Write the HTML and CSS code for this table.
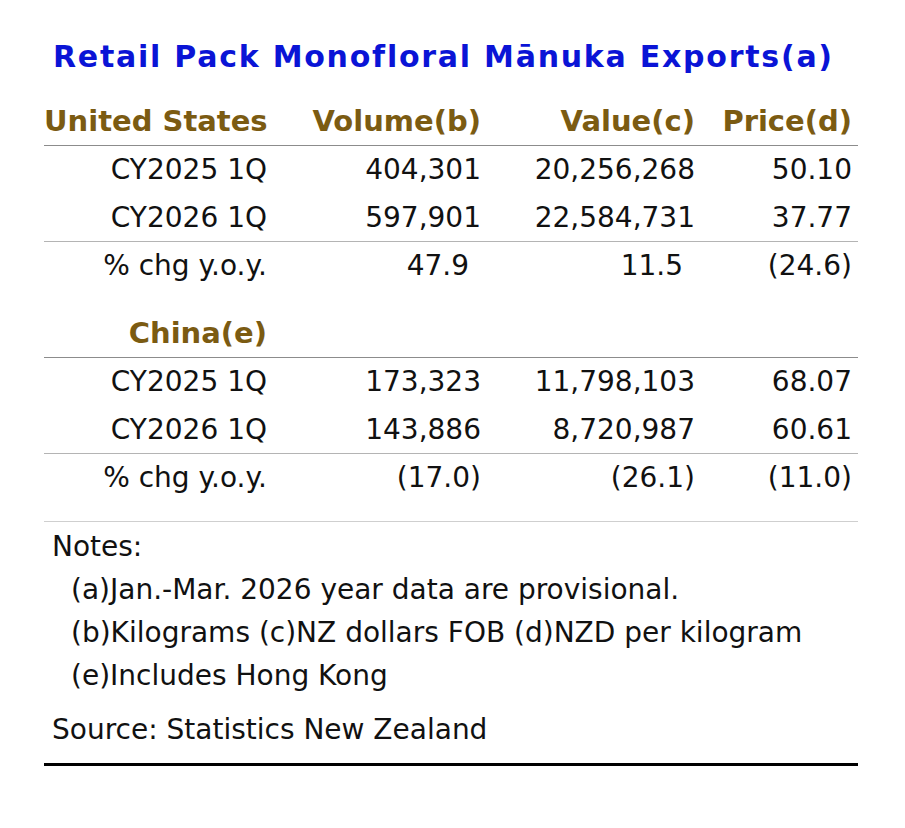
FILE: index.html
```html
<!DOCTYPE html>
<html lang="en">
<head>
<meta charset="utf-8">
<title>Retail Pack Monofloral Mānuka Exports</title>
<link rel="stylesheet" href="styles.css">
</head>
<body>
<div class="sheet">
  <h1 class="title">Retail Pack Monofloral Mānuka Exports(a)</h1>
  <table class="data">
    <colgroup>
      <col class="c1"><col class="c2"><col class="c3"><col class="c4">
    </colgroup>
    <tr class="head">
      <th>United States</th><th>Volume(b)</th><th>Value(c)</th><th>Price(d)</th>
    </tr>
    <tr><td>CY2025 1Q</td><td>404,301</td><td>20,256,268</td><td>50.10</td></tr>
    <tr class="ruled"><td>CY2026 1Q</td><td>597,901</td><td>22,584,731</td><td>37.77</td></tr>
    <tr><td>% chg y.o.y.</td><td class="pos">47.9</td><td class="pos">11.5</td><td>(24.6)</td></tr>
    <tr class="spacer"><td colspan="4"></td></tr>
    <tr class="head"><th>China(e)</th><th></th><th></th><th></th></tr>
    <tr><td>CY2025 1Q</td><td>173,323</td><td>11,798,103</td><td>68.07</td></tr>
    <tr class="ruled"><td>CY2026 1Q</td><td>143,886</td><td>8,720,987</td><td>60.61</td></tr>
    <tr><td>% chg y.o.y.</td><td>(17.0)</td><td>(26.1)</td><td>(11.0)</td></tr>
    <tr class="spacer light"><td colspan="4"></td></tr>
  </table>
  <div class="notes">
    <p class="notes-head">Notes:</p>
    <p class="note">(a)Jan.-Mar. 2026 year data are provisional.</p>
    <p class="note">(b)Kilograms (c)NZ dollars FOB (d)NZD per kilogram</p>
    <p class="note">(e)Includes Hong Kong</p>
    <p class="source">Source: Statistics New Zealand</p>
  </div>
  <div class="rule-end"></div>
</div>
</body>
</html>
```
FILE: styles.css
```css
html, body {
  margin: 0;
  padding: 0;
  background: #ffffff;
}

body {
  font-family: "DejaVu Sans", Verdana, sans-serif;
  color: #111111;
}

.sheet {
  width: 814px;
  margin-left: 44px;
  padding-top: 37px;
}

.title {
  margin: 0 0 21px 0;
  padding-left: 9px;
  font-size: 30px;
  line-height: 40px;
  font-weight: bold;
  letter-spacing: 1.75px;
  color: #0a14d6;
  white-space: nowrap;
}

.data {
  width: 814px;
  border-collapse: collapse;
  table-layout: fixed;
}

.c1 { width: 229px; }
.c2 { width: 214px; }
.c3 { width: 214px; }
.c4 { width: 157px; }

.data th,
.data td {
  height: 48px;
  padding: 0 6px 0 0;
  text-align: right;
  font-size: 28px;
  line-height: 48px;
  white-space: nowrap;
}

.data th {
  height: 47px;
  line-height: 47px;
  font-size: 29px;
  font-weight: bold;
  color: #7b5b12;
}

.data tr.head {
  border-bottom: 1px solid #8c8c8c;
}

.data tr.ruled {
  border-bottom: 1px solid #b4b4b4;
}

.data tr.ruled td {
  height: 47px;
  line-height: 47px;
}

.data td.pos {
  padding-right: 18px;
}

.data tr.spacer td {
  height: 20px;
  line-height: 20px;
}

.data tr.spacer.light td {
  height: 19px;
  line-height: 19px;
}

.data tr.spacer.light {
  border-bottom: 1px solid #cfcfcf;
}

.notes {
  padding-left: 8px;
  padding-top: 3px;
  font-size: 28px;
}

.notes p {
  margin: 0;
  line-height: 43px;
  white-space: nowrap;
}

.notes .note {
  padding-left: 19px;
}

.notes .source {
  margin-top: 11px;
  line-height: 44px;
}

.rule-end {
  margin-top: 11px;
  height: 3px;
  background: #000000;
}
```
